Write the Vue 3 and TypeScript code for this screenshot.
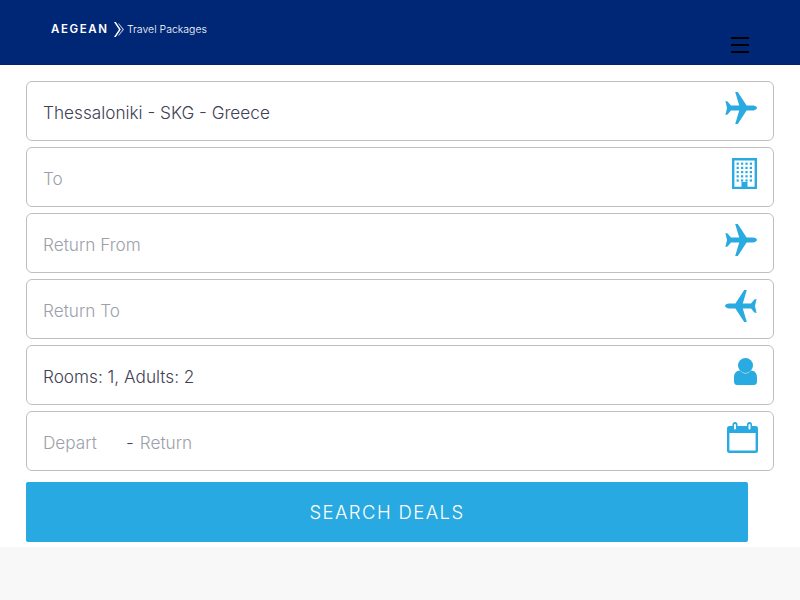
<script setup lang="ts">
interface Field {
  label: string
  filled: boolean
  icon: string
}
const fields: Field[] = [
  { label: 'Thessaloniki - SKG - Greece', filled: true, icon: 'plane' },
  { label: 'To', filled: false, icon: 'hotel' },
  { label: 'Return From', filled: false, icon: 'plane' },
  { label: 'Return To', filled: false, icon: 'planeBack' },
  { label: 'Rooms: 1, Adults: 2', filled: true, icon: 'person' },
]
const planePath =
  'M32 16C32 15 30 13.6 28 13.6L21.6 13.6 12.8 0 10.2 0 14.2 13.6 6 13.6 2.6 9.6 .4 9 2 16 .4 23 2.6 22.4 6 18.4 14.2 18.4 10.2 32 12.8 32 21.6 18.4 28 18.4C30 18.4 32 17 32 16Z'
const windows: { x: number; y: number }[] = []
for (let r = 0; r < 5; r++) for (let c = 0; c < 4; c++) windows.push({ x: 4.6 + c * 4.4, y: 4.6 + r * 4.2 })
</script>

<template>
  <div class="page">
    <header class="topbar">
      <div class="brand">
        <span class="brand-name">AEGEAN</span>
        <svg class="chevrons" viewBox="0 0 12 15" width="12" height="15" aria-hidden="true">
          <path d="M1 0 6 7.5 1 15 2.8 15 7.8 7.5 2.8 0Z" fill="#fff" />
          <path d="M5 1.5 9.6 7.5 5 13.5 6 13.5 11 7.5 6 1.5Z" fill="#b9c5de" />
        </svg>
        <span class="brand-sub">Travel Packages</span>
      </div>
      <button class="burger" aria-label="Menu"><i></i><i></i><i></i></button>
    </header>

    <main class="form">
      <div v-for="f in fields" :key="f.label" class="field">
        <span :class="f.filled ? 'value' : 'placeholder'">{{ f.label }}</span>
        <svg v-if="f.icon === 'plane'" class="icon plane" viewBox="0 0 32 32" width="32" height="32">
          <path :d="planePath" />
        </svg>
        <svg v-else-if="f.icon === 'planeBack'" class="icon plane back" viewBox="0 0 32 32" width="32" height="32">
          <path :d="planePath" />
        </svg>
        <svg v-else-if="f.icon === 'hotel'" class="icon hotel" viewBox="0 0 25 31" width="25" height="31">
          <path fill-rule="evenodd" d="M0 0H25V31H0ZM2.4 2.4V28.8H9.5V24H15.5V28.8H22.6V2.4Z" />
          <rect v-for="(w, i) in windows" :key="i" :x="w.x" :y="w.y" width="2.2" height="2.2" />
        </svg>
        <svg v-else class="icon person" viewBox="0 0 23 27" width="23" height="27">
          <circle cx="11.5" cy="7.5" r="7.5" />
          <path d="M0 19C0 15 2.5 12.6 6 12.4 7.6 14.4 9.4 15.4 11.5 15.4 13.6 15.4 15.4 14.4 17 12.4 20.5 12.6 23 15 23 19V23.5C23 26 21.5 27 20 27H3C1.5 27 0 26 0 23.5Z" />
        </svg>
      </div>

      <div class="field">
        <span class="dates">
          <span class="placeholder depart">Depart</span>
          <span class="dash">-</span>
          <span class="placeholder">Return</span>
        </span>
        <svg class="icon calendar" viewBox="0 0 31 31" width="31" height="31">
          <path fill-rule="evenodd" d="M2.5 4H28.5Q31 4 31 6.5V28.5Q31 31 28.5 31H2.5Q0 31 0 28.5V6.5Q0 4 2.5 4ZM2.4 11V28.6H28.6V11Z" />
          <rect x="5.5" y="0" width="5" height="9" rx="2.5" />
          <rect x="20" y="0" width="5" height="9" rx="2.5" />
          <rect x="7" y="2" width="2" height="5.5" rx="1" fill="#fff" />
          <rect x="21.5" y="2" width="2" height="5.5" rx="1" fill="#fff" />
        </svg>
      </div>

      <button class="search">SEARCH DEALS</button>
    </main>
  </div>
</template>

<style>
html, body {
  margin: 0;
  background: #f8f8f8;
}
</style>

<style scoped>
.page {
  width: 800px;
  font-family: "Inter", "Liberation Sans", sans-serif;
}
.topbar {
  height: 65px;
  background: #002776;
  display: flex;
  justify-content: space-between;
  box-sizing: border-box;
  padding: 21px 51px 0 51px;
}
.brand {
  display: flex;
  align-items: center;
  height: 16px;
  color: #fff;
}
.brand-name {
  font-size: 11.5px;
  font-weight: 600;
  letter-spacing: 1.6px;
  width: 62px;
}
.chevrons {
  margin-right: 2px;
}
.brand-sub {
  font-size: 10.5px;
  font-weight: 300;
}
.burger {
  display: flex;
  flex-direction: column;
  gap: 5px;
  width: 18px;
  margin: 16px 0 0;
  padding: 0;
  border: 0;
  background: none;
}
.burger i {
  display: block;
  height: 2px;
  background: #000;
}
.form {
  background: #fff;
  padding: 16px 26px 5px;
  display: flex;
  flex-direction: column;
  gap: 6px;
}
.field {
  height: 60px;
  box-sizing: border-box;
  border: 1px solid #bfbfbf;
  border-radius: 6px;
  background: #fff;
  padding: 0 16px;
  display: flex;
  align-items: center;
  justify-content: space-between;
  position: relative;
  font-size: 17.2px;
  font-weight: 300;
}
.value {
  color: #3f4155;
  margin-top: 3px;
}
.placeholder {
  color: #9d9fab;
  margin-top: 3px;
}
.dates {
  display: flex;
}
.depart {
  width: 83px;
}
.dash {
  color: #45475a;
  margin: 3px 6px 0 0;
}
.icon {
  position: absolute;
  fill: #29abe2;
}
.plane {
  right: 16px;
  top: 10px;
}
.back {
  transform: scaleX(-1);
}
.hotel {
  right: 16px;
  top: 10px;
}
.person {
  right: 16px;
  top: 12px;
}
.calendar {
  right: 15px;
  top: 10px;
}
.search {
  margin-top: 5px;
  width: 722px;
  height: 60px;
  border: 0;
  border-radius: 2px;
  background: #29a9e1;
  color: #fff;
  font-family: inherit;
  font-size: 18.5px;
  font-weight: 300;
  letter-spacing: 1.4px;
}
</style>
